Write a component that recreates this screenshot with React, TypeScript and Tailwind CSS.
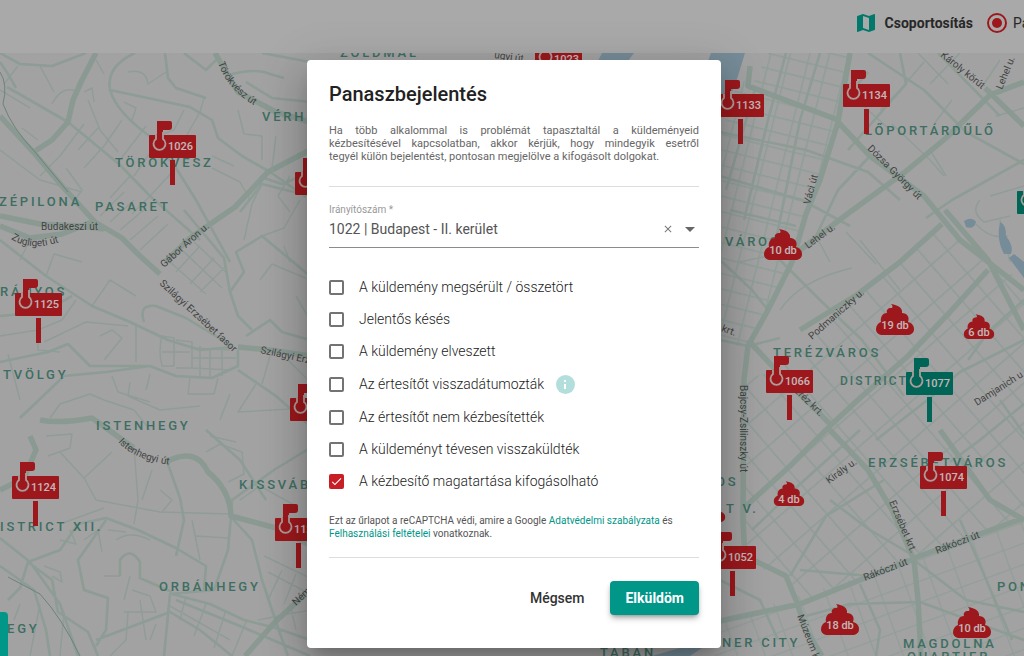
import React, { useState } from 'react';
import { MdArrowDropDown, MdCheck, MdClose, MdMap } from 'react-icons/md';

type Point = [number, number];

const wideRoads = [
  'M96 53 L82 80 L73 100 L68 122 L52 140 L32 153',
  'M0 116 L35 154 L62 186 L95 222 L122 238 L140 256 L160 274',
  'M0 216 L40 224 L80 226 L104 229',
  'M310 150 L268 172 L235 207 L190 238 L165 262',
  'M215 53 L238 92 L276 112 L310 122',
  'M0 226 L30 238 L62 234 L92 222',
  'M166 462 Q196 446 208 472 Q230 490 231 516 L276 528 L310 545',
  'M40 420 Q60 424 92 418 L134 448',
  'M30 436 L36 450 L24 478 L0 490',
  'M310 590 L275 622 L245 656',
  'M238 347 L270 350 L310 356',
  'M850 53 L838 122 L820 180 L806 214 L792 262 L768 310 L748 346 L744 380 L743 520 L745 560',
  'M1024 82 L990 95 L946 138 L905 172 L850 212 L800 250',
  'M985 88 L1024 126',
  'M945 210 L988 260 L1024 330',
  'M838 122 L870 156 L924 196 L960 240 L1024 290',
  'M942 224 L900 262 L858 294 L800 330',
  'M988 270 L950 312 L908 356 L860 398 L832 424 L790 466 L746 506',
  'M748 340 L776 370 L830 424',
  'M830 430 L868 470 L892 510 L914 560',
  'M715 622 L800 604 L865 578 L920 556 L1024 518',
  'M914 560 L918 600 L921 656',
  'M940 430 L990 500 L1024 520',
  'M745 556 L786 576 L796 600 L806 630 L822 656',
  'M750 66 L748 86 L838 120',
];

const midRoads = [
  'M7 87 L68 122 L120 165 L150 196 L200 240',
  'M110 90 L190 107 L212 120 L218 138 L242 156 L270 172 L306 197',
  'M135 53 Q106 66 110 90 Q116 112 152 138 L176 168 L196 200 L230 262',
  'M0 240 L46 276 L92 306 L130 322 L168 340 L200 350 L232 347',
  'M144 322 Q138 304 156 306 L186 318 L232 346',
  'M0 316 L44 312 L72 296',
  'M184 210 L224 258 L230 292 L244 272 L236 252 L262 236 L310 276',
  'M246 336 L270 320 L282 332 L310 340',
  'M230 292 L238 316 L252 330',
  'M238 350 L238 366 L212 378 L176 376 L150 366 L106 372 L64 376 L20 418',
  'M0 362 L48 352 L68 344 L90 366 L150 366',
  'M8 600 L20 588 L28 562 L60 550 L78 524 L106 518 L138 530 L176 548 L206 566 L204 590',
  'M28 562 L52 580 L58 612 L88 632 L98 656',
  'M120 576 L120 560 Q130 546 140 562 L140 578 L172 592',
  'M165 456 L180 498 L184 520 L176 556',
  'M231 516 L228 550 L214 590 L170 594 L164 656',
  'M232 518 L252 540 L262 580 L276 622 L288 656',
  'M106 520 L78 560 L84 590 L108 598 L106 630 L96 646',
  'M172 594 L210 604 L244 620 L276 628 L310 640',
  'M176 600 L240 626 L310 656',
  'M96 640 L170 612 L200 630 L232 656',
  'M310 448 L274 470 L232 500 L231 516',
  'M206 430 L240 460 L266 500',
  'M238 370 L276 396 L310 426',
  'M0 538 L30 562 L60 604 L78 656',
  'M0 566 L34 590 L46 630 L50 656',
  'M0 53 L20 64 L52 66 L86 53',
  'M16 88 L8 74 L0 62',
  'M165 53 L168 78 L176 88 L206 98',
  'M246 82 L272 98 L310 102',
  'M232 74 Q256 68 270 74 L284 78',
  'M310 172 L282 184 L264 178',
  'M262 53 L310 62',
  'M310 196 L262 184 L240 212',
  'M184 53 L206 70 L216 60',
  'M720 132 L806 150 L868 172 L900 200',
  'M720 176 L802 200 L850 226',
  'M730 210 L796 226',
  'M786 53 L768 120 L744 220',
  'M820 53 L800 120 L776 240',
  'M756 86 L726 190',
  'M868 53 L924 90 L966 132 L1024 164',
  'M1024 160 L952 200 L926 218',
  'M868 72 L838 108',
  'M900 53 L906 84 L848 150',
  'M938 53 L1000 116',
  'M870 156 L838 190 L816 236',
  'M776 256 L820 300 L862 340 L904 396',
  'M1024 340 L960 372 L930 398 L876 440',
  'M1024 300 L990 330 L968 360',
  'M1024 404 L980 440 L950 462',
  'M720 260 L752 290 L768 310',
  'M720 340 L748 346 L780 338',
  'M860 430 L798 486 L752 530',
  'M884 480 L826 516 L790 576',
  'M914 556 L870 530 L830 500',
  'M914 560 L966 600 L1024 612',
  'M860 584 L880 630 L876 656',
  'M806 616 L850 604 L920 602 L1024 640',
  'M720 580 L760 600 L778 640',
  'M960 520 L976 556 L1012 640',
  'M1000 400 L1024 434',
  'M800 570 L870 576',
];

const thinRoads = [
  'M40 66 L54 92 M52 104 Q62 84 78 92 M88 100 L100 130 L118 152',
  'M18 66 L4 84 M96 60 L104 74 M84 92 L92 88 L94 102 M128 72 Q146 68 148 84 L166 72',
  'M124 102 L136 108 L132 120 M122 120 L104 146 L84 168 M146 126 L120 160',
  'M84 124 L60 156 L40 176 M98 128 L78 150 M22 128 L38 140 M0 150 L40 180 L82 192',
  'M66 168 L82 190 L72 204 M130 176 L110 198 M152 150 L134 176 M176 168 L150 196 L132 214',
  'M0 90 L30 108 M204 98 L200 112 M238 110 L244 134 L262 136 L262 160 M276 136 L272 168',
  'M212 156 L234 166 M212 168 L240 182 L250 200 M184 110 L174 130 L152 138 M200 112 L184 140',
  'M290 176 L278 196 L290 212 M262 184 L252 204 L244 240 M300 200 L284 228 L262 236',
  'M100 216 L124 192 M110 222 L134 200 M120 230 L146 208 M130 240 L158 216 M140 250 L168 224',
  'M170 262 L206 294 M182 250 L222 288 M194 242 L226 272 M176 272 L200 246 M190 284 L214 258',
  'M200 292 L226 266 M20 260 L28 244 M46 276 L54 254 L82 262 M92 306 L110 280 L136 296',
  'M162 336 Q158 350 162 366 L174 366 L174 338 Z M176 340 L192 342 L192 368 L176 368 M162 352 L190 352',
  'M192 348 L230 350 M192 358 L236 358 M192 368 L230 370 M200 346 L200 376 M210 348 L210 378 M222 350 L222 376',
  'M100 336 L112 330 L122 338 L104 360 M136 326 L136 362 M76 300 L62 320 L38 330 L0 336',
  'M44 342 L86 322 L128 326 M38 332 L38 350 L60 352 M8 354 L20 400 M130 382 L128 396 L160 410 L200 406',
  'M190 378 L188 394 L214 394 L218 378 M150 374 L146 390 M112 376 L118 392 L150 402',
  'M50 418 L60 404 L90 394 L104 400 L134 410 L150 430 M230 394 L220 420 M256 384 L238 412 L310 408',
  'M270 356 L262 384 M288 360 L310 382 M260 280 L272 264 L310 280 M284 246 L290 262 M296 296 L310 320',
  'M46 436 L72 434 L70 448 L48 456 M60 452 L84 478 L96 500 L160 512 L232 514 M104 508 L60 524',
  'M84 478 L112 452 M134 448 L138 500 L134 524 M152 470 L142 500 M160 490 L172 500 L162 512',
  'M206 452 L220 444 L242 452 L244 474 L228 482 M236 442 L210 436 M240 500 L260 486 L296 506',
  'M196 536 L228 538 M192 520 L200 560 M116 540 Q130 530 150 540 M108 530 L126 532 M84 540 L98 530 L102 552',
  'M44 566 L60 572 L62 582 L52 576 M70 530 L76 544 L60 540 M130 576 L124 600 M132 590 L150 596 L156 612 L124 612',
  'M170 606 L230 640 M186 596 L180 620 M206 604 L194 636 M226 610 L214 648 M246 622 L232 656 M120 576 L104 576',
  'M264 556 L310 578 M268 572 L310 594 M258 620 L310 610 M282 570 L268 600 M296 574 L284 604 M290 604 L296 630',
  'M40 604 L30 656 M20 604 L14 620 M64 612 L60 656 M140 600 L146 640 M128 612 L126 640 L110 656 M150 640 L156 624',
  'M740 262 L812 246 M780 310 Q800 280 852 268 M860 240 L900 290 M846 232 L876 264 M816 236 L830 262',
  'M980 200 Q970 212 984 222 L1010 216 M976 224 Q990 240 1008 236 M990 196 L1024 186 M1000 220 L1010 262',
  'M880 110 L900 90 L924 62 M884 96 L860 92 M846 90 L890 130 M892 124 L930 160 L944 176 M952 100 L934 124',
  'M930 150 L946 176 M996 116 L1024 108 M1000 60 L984 84 M960 53 L930 84 M918 53 L948 84',
];

const lakes = [
  'M720 53 H745 L736 82 L722 116 L720 116 Z',
  'M964 221 Q972 216 976 222 Q974 230 966 227 Z',
  'M1000 222 Q1006 224 1006 236 Q1014 246 1011 254 L1004 254 Q996 240 1000 222 Z',
  'M1009 258 L1014 254 L1024 262 V278 Z',
  'M602 53 H634 L628 61 H598 Z',
  'M711 53 H722 V61 H708 Z',
  'M652 656 L680 648 H702 L690 656 Z',
];

const districts: { name: string; at: Point }[] = [
  { name: 'ZÖLDMÁL', at: [340, 57] },
  { name: 'VÉRH', at: [262, 121] },
  { name: 'TÖRÖKVÉSZ', at: [115, 167] },
  { name: 'ZÉPILONA', at: [-1, 206] },
  { name: 'PASARÉT', at: [95, 211] },
  { name: 'RÁNYOS', at: [0, 296] },
  { name: 'TVÖLGY', at: [3, 379] },
  { name: 'ISTENHEGY', at: [96, 430] },
  { name: 'KISSVÁB', at: [239, 489] },
  { name: 'ISTRICT XII.', at: [0, 531] },
  { name: 'ORBÁNHEGY', at: [159, 591] },
  { name: 'EGY', at: [7, 633] },
  { name: 'LŐPORTÁRDŰLŐ', at: [865, 135] },
  { name: 'VÁROS', at: [725, 246] },
  { name: 'TERÉZVÁROS', at: [773, 357] },
  { name: 'ERZSÉBETVÁROS', at: [868, 467] },
  { name: 'OS', at: [716, 486] },
  { name: 'T V.', at: [726, 513] },
  { name: 'PON', at: [997, 591] },
  { name: 'NER CITY', at: [722, 647] },
  { name: 'MAGDOLNA', at: [903, 648] },
  { name: 'QUARTIER', at: [907, 661] },
  { name: 'TABAN', at: [600, 657] },
];

const streets: { name: string; line: string }[] = [
  { name: 'Törökvész út', line: 'M218 63 Q228 92 262 110' },
  { name: 'Budakeszi út', line: 'M41 230 L110 230' },
  { name: 'Zugligeti út', line: 'M11 239 Q34 254 70 238' },
  { name: 'Gábor Áron u.', line: 'M164 268 L220 218' },
  { name: 'Szilágyi Erzsébet fasor', line: 'M159 284 L250 368' },
  { name: 'Szilágyi Erz', line: 'M260 353 L330 368' },
  { name: 'Istenhegyi út', line: 'M118 442 Q138 464 186 466' },
  { name: 'Ném', line: 'M296 606 L330 574' },
  { name: 'úgyi út', line: 'M494 58 L540 64' },
  { name: 'Károly körút', line: 'M940 56 L1000 104' },
  { name: 'Lehel u.', line: 'M1002 90 L1020 46' },
  { name: 'Dózsa György út', line: 'M867 149 L930 212' },
  { name: 'Váci út', line: 'M810 205 L822 160' },
  { name: 'Lehel u.', line: 'M808 249 L850 218' },
  { name: 'Podmaniczky u.', line: 'M812 340 L880 280' },
  { name: 'Teréz krt.', line: 'M790 388 L840 436' },
  { name: 'Bajcsy-Zsilinszky út', line: 'M740 385 L740 500' },
  { name: 'krt.', line: 'M721 331 L760 345' },
  { name: 'Király u.', line: 'M829 484 L880 447' },
  { name: 'Damjanich u.', line: 'M977 406 L1040 366' },
  { name: 'Erzsébet krt.', line: 'M889 502 L918 570' },
  { name: 'Rákóczi út', line: 'M865 581 L930 556' },
  { name: 'Rákóczi út', line: 'M937 554 L1010 526' },
  { name: 'Múzeum k', line: 'M797 616 L822 680' },
];

const RED = '#c41f24';
const GREEN = '#007d6c';

const mailboxes: { zip: string; at: Point; fill: string }[] = [
  { zip: '1023', at: [535, 48], fill: RED },
  { zip: '1026', at: [149, 135], fill: RED },
  { zip: '', at: [295, 172], fill: RED },
  { zip: '1125', at: [15, 293], fill: RED },
  { zip: '', at: [290, 398], fill: RED },
  { zip: '1124', at: [12, 476], fill: RED },
  { zip: '112', at: [275, 518], fill: RED },
  { zip: '1133', at: [717, 94], fill: RED },
  { zip: '1134', at: [843, 84], fill: RED },
  { zip: '1066', at: [766, 370], fill: RED },
  { zip: '1077', at: [906, 372], fill: GREEN },
  { zip: '1074', at: [920, 466], fill: RED },
  { zip: '1052', at: [709, 546], fill: RED },
  { zip: '', at: [1017, 191], fill: GREEN },
];

const clusters: { label: string; at: Point; scale: number }[] = [
  { label: '10 db', at: [783, 245], scale: 1 },
  { label: '19 db', at: [895, 320], scale: 1 },
  { label: '6 db', at: [979, 327], scale: 0.8 },
  { label: '4 db', at: [789, 494], scale: 0.8 },
  { label: '18 db', at: [840, 620], scale: 1 },
  { label: '10 db', at: [972, 623], scale: 1 },
  { label: '', at: [710, 510], scale: 0.8 },
];

const reasons = [
  { id: 'damaged', label: 'A küldemény megsérült / összetört' },
  { id: 'late', label: 'Jelentős késés' },
  { id: 'lost', label: 'A küldemény elveszett' },
  { id: 'backdated', label: 'Az értesítőt visszadátumozták', info: true },
  { id: 'no-notice', label: 'Az értesítőt nem kézbesítették' },
  { id: 'returned', label: 'A küldeményt tévesen visszaküldték' },
  { id: 'behaviour', label: 'A kézbesítő magatartása kifogásolható' },
];

const Mailbox = ({ zip, at, fill }: { zip: string; at: Point; fill: string }) => (
  <g transform={`translate(${at[0]} ${at[1]})`}>
    <rect x="21" y="25" width="5" height="25" fill={fill} />
    <rect width="47" height="23" rx="1" fill={fill} />
    <path d="M8 4 V-14 H21 Q23 -14 23 -12 V-8 Q23 -5 20 -5 H14 V4 Z" fill={fill} />
    <path
      d="M7 0 V4 A6 6 0 1 0 14 4 V-3"
      fill={fill}
      stroke="#d8c4c0"
      strokeWidth="1.8"
    />
    <text x="19" y="15" fontSize="11" fontWeight="500" fill="#f4e4e4">
      {zip}
    </text>
  </g>
);

const Cluster = ({ label, at, scale }: { label: string; at: Point; scale: number }) => (
  <g transform={`translate(${at[0]} ${at[1]})`}>
    <path
      transform={`scale(${scale}) translate(-19 -16)`}
      d="M15 0 C22 1 27 4 26 9 C31 9 34 13 32 18 C36 19 38 22 38 25 C38 29 35 31 31 31 H7 C3 31 0 29 0 25 C0 22 2 19 5 18 C4 14 6 9 11 9 C10 6 12 4 15 4 C17 4 17 2 15 0 Z"
      fill={RED}
    />
    <text y="9" textAnchor="middle" fontSize="11" fontWeight="500" fill="#f4e4e4">
      {label}
    </text>
  </g>
);

const CityMap = () => (
  <svg
    viewBox="0 53 1024 603"
    preserveAspectRatio="xMidYMid slice"
    className="absolute inset-0 h-full w-full"
    aria-label="Budapest"
  >
    <defs>
      <pattern id="blocks-north" width="19" height="15" patternUnits="userSpaceOnUse" patternTransform="rotate(14)">
        <path d="M0 0 H19 M0 0 V15" stroke="#b3c6be" strokeWidth="3" />
      </pattern>
      <pattern id="blocks-center" width="22" height="30" patternUnits="userSpaceOnUse" patternTransform="rotate(-41)">
        <path d="M0 0 H22 M0 0 V30" stroke="#b3c4bd" strokeWidth="3" />
      </pattern>
      <pattern id="blocks-south" width="26" height="20" patternUnits="userSpaceOnUse" patternTransform="rotate(-20)">
        <path d="M0 0 H26 M0 0 V20" stroke="#b6c6bf" strokeWidth="2.6" />
      </pattern>
    </defs>
    <rect y="53" width="1024" height="603" fill="#cbcbcb" />
    <polygon points="738,78 838,122 806,214 792,262 748,346 715,346 715,160" fill="url(#blocks-north)" />
    <polygon points="768,53 850,53 838,122 750,90" fill="url(#blocks-north)" />
    <polygon
      points="1024,278 1024,518 914,560 806,600 745,556 743,380 776,370 820,330 942,224 988,266"
      fill="url(#blocks-center)"
    />
    <polygon points="715,622 914,560 1024,518 1024,656 715,656" fill="url(#blocks-south)" />
    <g fill="none" strokeLinejoin="round">
      <path d={thinRoads.join(' ')} stroke="#b4c4bd" strokeWidth="1.5" />
      <path d={midRoads.join(' ')} stroke="#b1c3bb" strokeWidth="2.6" />
      <path d={wideRoads.join(' ')} stroke="#adc1b8" strokeWidth="5.5" />
      <path d="M0 72 Q8 84 3 104 Q12 128 35 152 L68 192 M8 577 L40 594 Q62 618 80 656" stroke="#86a697" />
    </g>
    {lakes.map((lake) => (
      <path key={lake} d={lake} fill="#94afbf" />
    ))}
    <g fontSize="13" fontWeight="500" letterSpacing="2.8" fill="#4e8a7a">
      {districts.map(({ name, at }) => (
        <text key={name} x={at[0]} y={at[1]}>
          {name}
        </text>
      ))}
      <text x="840" y="385" fontSize="12" letterSpacing="2">
        DISTRICT
      </text>
    </g>
    <g fontSize="10" fill="#555">
      {streets.map(({ name, line }, i) => (
        <React.Fragment key={line}>
          <path id={`street-${i}`} d={line} fill="none" />
          <text>
            <textPath href={`#street-${i}`}>{name}</textPath>
          </text>
        </React.Fragment>
      ))}
    </g>
    {mailboxes.map((box) => (
      <Mailbox key={box.at.join()} {...box} />
    ))}
    {clusters.map((cluster) => (
      <Cluster key={cluster.at.join()} {...cluster} />
    ))}
  </svg>
);

const Header = () => (
  <header className="flex h-[53px] items-center justify-end overflow-hidden bg-[#d4d4d4] pb-2 text-sm">
    <button type="button" className="flex items-center gap-[7px] font-bold text-[#333]">
      <MdMap className="size-6 text-[#009688]" />
      Csoportosítás
    </button>
    <label className="ml-3 flex items-center gap-1 text-[#333]">
      <span className="grid size-6 place-items-center">
        <input
          type="radio"
          name="view"
          defaultChecked
          className="col-start-1 row-start-1 size-5 appearance-none rounded-full border-2 border-[#c41f24]"
        />
        <span className="pointer-events-none col-start-1 row-start-1 size-[10px] rounded-full bg-[#c41f24]" />
      </span>
      <span className="w-[11px] whitespace-nowrap">Pa</span>
    </label>
  </header>
);

const App = () => {
  const [zip, setZip] = useState('1022 | Budapest - II. kerület');
  const [checked, setChecked] = useState<string[]>(['behaviour']);

  const toggle = (id: string) =>
    setChecked((prev) => (prev.includes(id) ? prev.filter((item) => item !== id) : [...prev, id]));

  return (
    <div className="relative flex min-h-screen flex-col overflow-hidden font-['Roboto',sans-serif]">
      <Header />
      <main className="relative flex-1">
        <CityMap />
      </main>

      <div className="absolute inset-0 flex items-start justify-center bg-black/20 pt-15 pb-2 pl-1">
        <div
          role="dialog"
          aria-labelledby="dialog-title"
          className="w-full max-w-[414px] rounded bg-white px-[22px] pt-5 pb-[33px] text-[#333] shadow-[0_11px_15px_-7px_rgba(0,0,0,0.2),0_24px_38px_3px_rgba(0,0,0,0.14),0_9px_46px_8px_rgba(0,0,0,0.12)]"
        >
          <h2 id="dialog-title" className="text-xl leading-7 font-medium text-[#222]">
            Panaszbejelentés
          </h2>
          <p className="mt-4 border-b border-[#ddd] pb-[23px] text-justify text-[11px] leading-[13px] text-[#666]">
            Ha több alkalommal is problémát tapasztaltál a küldeményeid kézbesítésével kapcsolatban, akkor kérjük,
            hogy mindegyik esetről tegyél&nbsp;külön bejelentést, pontosan megjelölve a kifogásolt dolgokat.
          </p>

          <div className="mt-[17px] border-b border-[#8c8c8c] pb-[5px]">
            <label htmlFor="zip" className="block text-[10px] leading-3 text-[#999]">
              Irányítószám *
            </label>
            <div className="flex items-center">
              <input
                id="zip"
                value={zip}
                onChange={(e) => setZip(e.target.value)}
                className="h-[26px] min-w-0 flex-1 text-sm text-[#555] outline-none"
              />
              <button type="button" aria-label="Törlés" onClick={() => setZip('')} className="p-1 text-[#777]">
                <MdClose className="size-3" />
              </button>
              <button type="button" aria-label="Megnyitás" className="-mr-[3px] text-[#666]">
                <MdArrowDropDown className="size-6" />
              </button>
            </div>
          </div>

          <ul className="mt-[23px]">
            {reasons.map(({ id, label, info }) => (
              <li key={id} className={info ? 'flex h-[34px] items-center' : 'flex h-8 items-center'}>
                <span className="grid place-items-center">
                  <input
                    id={id}
                    type="checkbox"
                    checked={checked.includes(id)}
                    onChange={() => toggle(id)}
                    className="peer col-start-1 row-start-1 size-[15px] appearance-none rounded-xs border-2 border-[#737373] checked:border-[#c81e26] checked:bg-[#c81e26]"
                  />
                  <MdCheck className="pointer-events-none col-start-1 row-start-1 hidden size-[13px] text-white peer-checked:block" />
                </span>
                <label htmlFor={id} className="pl-[15px] text-sm font-light text-[#222]">
                  {label}
                </label>
                {info && (
                  <button
                    type="button"
                    aria-label="Információ"
                    className="ml-3 grid size-[19px] place-items-center rounded-full bg-[#b2dfdb] text-white"
                  >
                    <svg viewBox="0 0 19 19" className="size-[19px]" fill="currentColor">
                      <rect x="8" y="5" width="2" height="2" />
                      <rect x="8" y="9" width="2" height="5" />
                    </svg>
                  </button>
                )}
              </li>
            ))}
          </ul>

          <p className="mt-[17px] border-b border-[#ddd] pb-[17px] text-[10px] leading-[13px] text-[#555]">
            Ezt az űrlapot a reCAPTCHA védi, amire a Google{' '}
            <a href="#privacy" className="text-[#009688]">
              Adatvédelmi szabályzata
            </a>{' '}
            és{' '}
            <a href="#terms" className="text-[#009688]">
              Felhasználási feltételei
            </a>{' '}
            vonatkoznak.
          </p>

          <div className="mt-[23px] flex justify-end gap-[10px]">
            <button type="button" className="h-[34px] px-4 text-sm font-medium text-[#333]">
              Mégsem
            </button>
            <button
              type="submit"
              className="h-[34px] rounded bg-[#009688] px-[15px] text-sm font-bold text-white shadow-md shadow-black/30"
            >
              Elküldöm
            </button>
          </div>
        </div>
      </div>

      <button
        type="button"
        aria-label="Menü"
        className="absolute bottom-0 left-0 h-11 w-2 rounded-tr bg-[#009688]"
      />
    </div>
  );
};

export default App;
